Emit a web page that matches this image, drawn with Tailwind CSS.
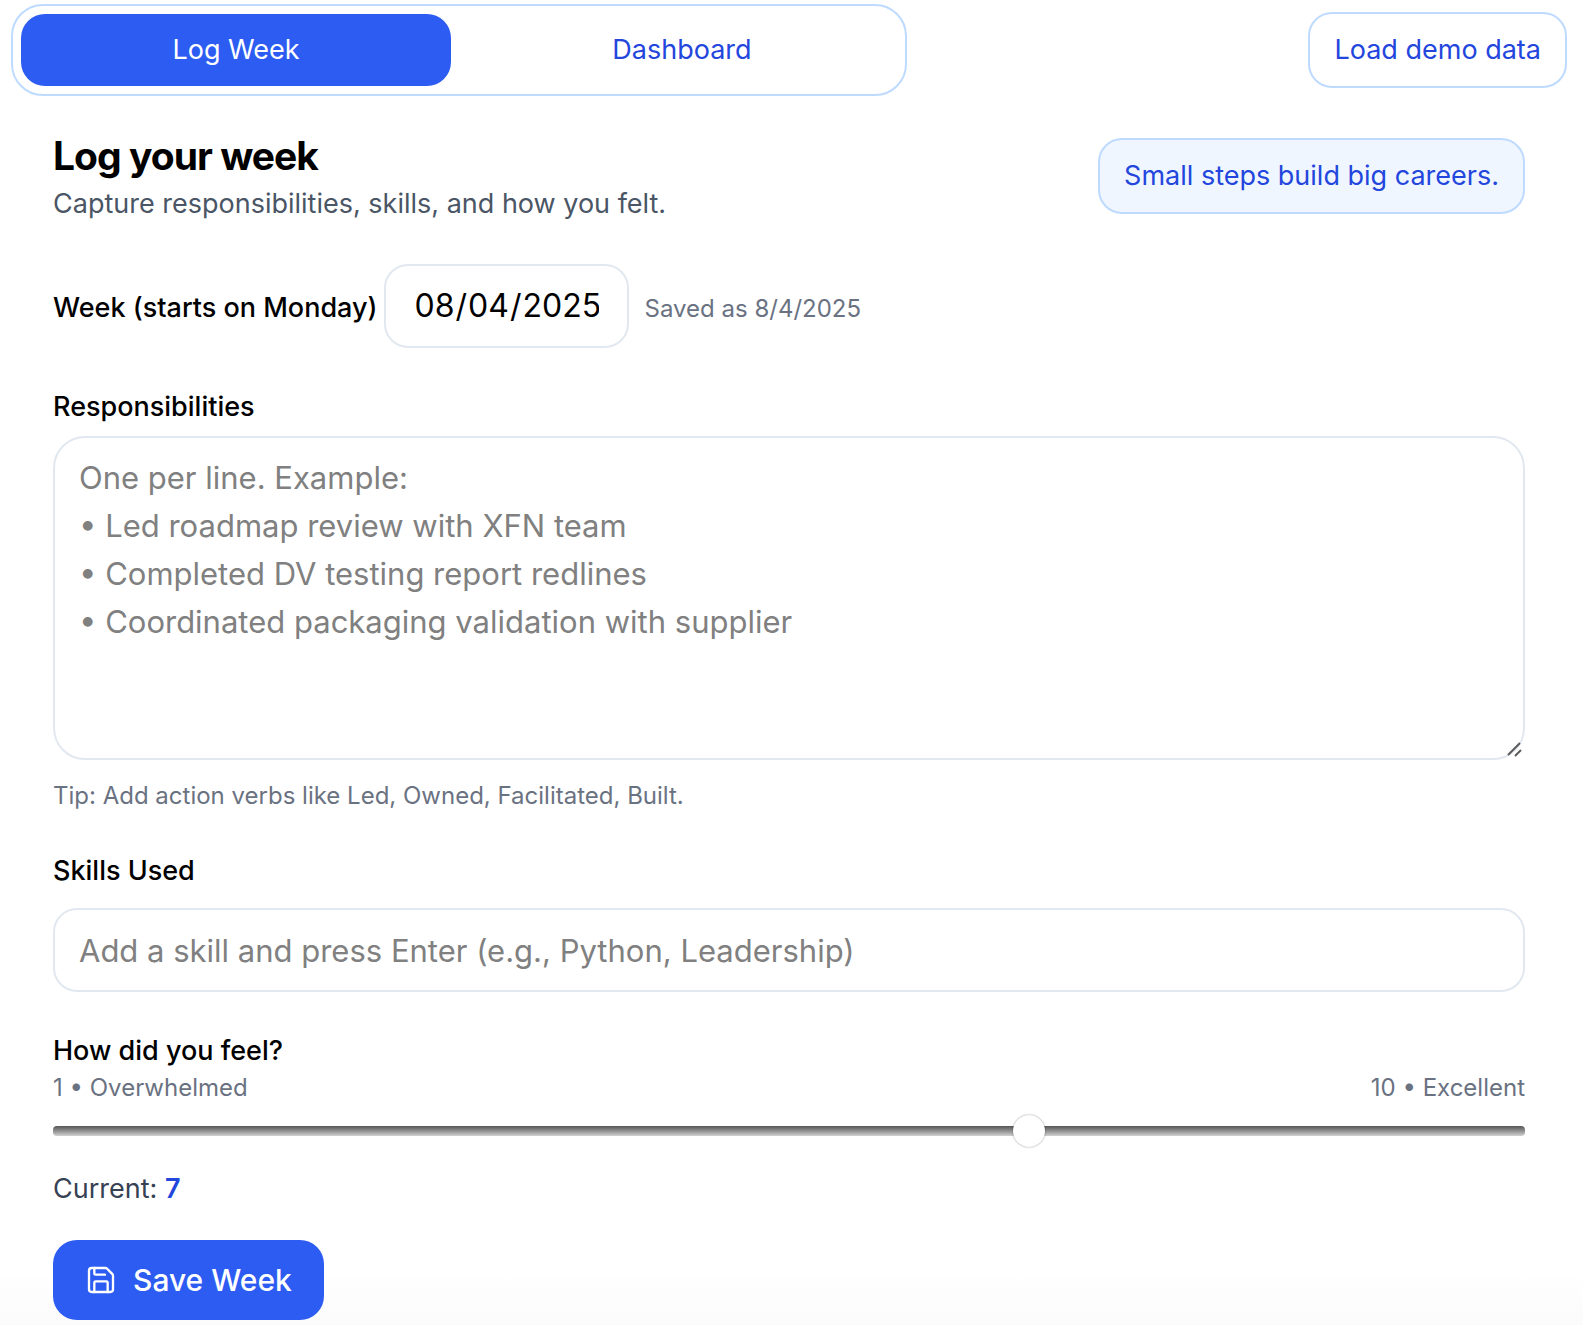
<!DOCTYPE html>
<html lang="en-US">
<head>
<meta charset="utf-8">
<meta name="viewport" content="width=device-width, initial-scale=1">
<title>Log your week</title>
<script src="https://cdn.jsdelivr.net/npm/@tailwindcss/browser@4"></script>
</head>
<body class="min-h-screen bg-linear-to-b from-white from-96% to-[#fbfbfb] font-[Inter,sans-serif] text-black">
<header class="flex items-center justify-between pt-1 pr-4 pl-[11px]">
  <nav class="grid w-full max-w-4xl grid-cols-2 gap-4 rounded-[32px] border-2 border-blue-200 p-2">
    <button type="button" class="rounded-3xl bg-[#2c5cf2] px-6 py-4 text-[27px] leading-10 text-white">Log Week</button>
    <button type="button" class="rounded-3xl px-6 py-4 text-[27px] leading-10 text-[#2346dd]">Dashboard</button>
  </nav>
  <button type="button" class="shrink-0 rounded-3xl border-2 border-blue-200 px-6 py-4 text-[27px] leading-10 text-[#2346dd]">Load demo data</button>
</header>
<main class="flex flex-col gap-10 pt-8 pr-[58px] pb-1 pl-[53px]">
  <div class="flex items-center justify-between">
    <div>
      <h1 class="text-[39px] leading-14 font-bold tracking-tight">Log your week</h1>
      <p class="text-[27px] leading-10 text-gray-600">Capture responsibilities, skills, and how you felt.</p>
    </div>
    <p class="rounded-3xl border-2 border-blue-200 bg-[#eff6ff] px-6 py-4 text-[27px] leading-10 text-[#2346dd]">Small steps build big careers.</p>
  </div>
  <div class="flex items-baseline">
    <label for="week" class="mr-1.5 text-[27px] leading-10 font-medium">Week (starts on Monday)</label>
    <input id="week" type="date" value="2025-08-04" class="h-[84px] w-[245px] rounded-3xl border-2 border-slate-200 px-7 text-[32px] [&::-webkit-calendar-picker-indicator]:hidden">
    <span class="ml-4 text-[24px] leading-8 text-gray-500">Saved as 8/4/2025</span>
  </div>
  <div class="flex flex-col">
    <label for="resp" class="mb-2.5 text-[27px] leading-[38px] font-medium">Responsibilities</label>
    <div class="relative flex">
      <textarea id="resp" class="h-[324px] w-full resize-none rounded-[32px] border-2 border-slate-200 px-6 py-4 text-[31px] leading-12 placeholder:text-[#808080]" placeholder="One per line. Example:
• Led roadmap review with XFN team
• Completed DV testing report redlines
• Coordinated packaging validation with supplier"></textarea>
      <svg class="pointer-events-none absolute right-0.5 bottom-0.5" width="16" height="16" viewBox="0 0 16 16" fill="none" stroke="#5c5c5c" stroke-width="2" aria-hidden="true"><path d="M1 13 13 1M8 14l6-6"/></svg>
    </div>
    <p class="mt-5 text-[24px] leading-8 text-gray-500">Tip: Add action verbs like Led, Owned, Facilitated, Built.</p>
  </div>
  <div class="flex flex-col">
    <label for="skills" class="mb-[18px] text-[27px] leading-[38px] font-medium">Skills Used</label>
    <input id="skills" type="text" class="h-[84px] w-full rounded-3xl border-2 border-slate-200 px-6 text-[31px] placeholder:text-[#808080]" placeholder="Add a skill and press Enter (e.g., Python, Leadership)">
  </div>
  <div class="flex flex-col">
    <label for="feel" class="mb-0.5 text-[27px] leading-[38px] font-medium">How did you feel?</label>
    <div class="flex justify-between text-[24px] leading-8 text-gray-500"><span>1 • Overwhelmed</span><span>10 • Excellent</span></div>
    <input id="feel" type="range" min="1" max="10" value="7" class="mt-[11px] h-8 w-full appearance-none bg-transparent [&::-webkit-slider-runnable-track]:h-2.5 [&::-webkit-slider-runnable-track]:rounded-sm [&::-webkit-slider-runnable-track]:bg-linear-to-b [&::-webkit-slider-runnable-track]:from-[#565656] [&::-webkit-slider-runnable-track]:to-[#d2d2d2] [&::-webkit-slider-thumb]:-mt-[11px] [&::-webkit-slider-thumb]:size-8 [&::-webkit-slider-thumb]:appearance-none [&::-webkit-slider-thumb]:rounded-full [&::-webkit-slider-thumb]:bg-white [&::-webkit-slider-thumb]:shadow-[0_0_2px_rgba(0,0,0,0.45)]">
    <p class="mt-[22px] text-[27px] leading-10 text-gray-700">Current: <span class="font-semibold text-[#2346dd]">7</span></p>
    <button type="button" class="mt-[31px] flex items-center gap-4 self-start rounded-3xl bg-[#2c5cf2] px-8 py-4 text-[30px] leading-12 font-medium text-white">
      <svg class="size-8" viewBox="0 0 24 24" fill="none" stroke="currentColor" stroke-width="1.75" stroke-linecap="round" stroke-linejoin="round" aria-hidden="true"><path d="M15.2 3a2 2 0 0 1 1.4.6l3.8 3.8a2 2 0 0 1 .6 1.4V19a2 2 0 0 1-2 2H5a2 2 0 0 1-2-2V5a2 2 0 0 1 2-2z"/><path d="M17 21v-7a1 1 0 0 0-1-1H8a1 1 0 0 0-1 1v7"/><path d="M7 3v4a1 1 0 0 0 1 1h7"/></svg>
      Save Week
    </button>
  </div>
</main>
</body>
</html>
